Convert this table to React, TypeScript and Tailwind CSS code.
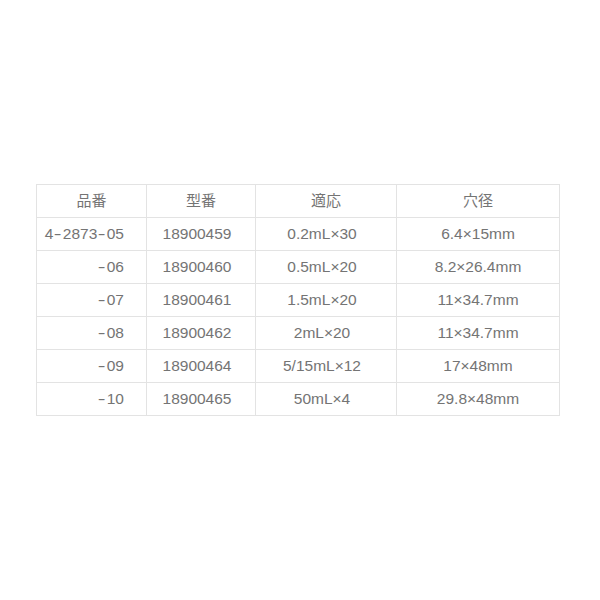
const rows = [
  { code: '4-2873-05', model: '18900459', fit: '0.2mL×30', hole: '6.4×15mm' },
  { code: '-06', model: '18900460', fit: '0.5mL×20', hole: '8.2×26.4mm' },
  { code: '-07', model: '18900461', fit: '1.5mL×20', hole: '11×34.7mm' },
  { code: '-08', model: '18900462', fit: '2mL×20', hole: '11×34.7mm' },
  { code: '-09', model: '18900464', fit: '5/15mL×12', hole: '17×48mm' },
  { code: '-10', model: '18900465', fit: '50mL×4', hole: '29.8×48mm' },
];

// hyphens in the source are set wider than Arial's, so give them their own box
const Code = ({ text }: { text: string }) => {
  const parts = text.split('-');
  return (
    <>
      {parts.map((p, i) => (
        <span key={i}>
          {i > 0 && <span className="inline-block w-[9.5px] text-center scale-x-150">-</span>}
          {p}
        </span>
      ))}
    </>
  );
};

const App = () => {
  return (
    <div
      className="w-[600px] h-[600px] bg-white pt-[184px] pl-[36px]"
      style={{ fontFamily: '"Liberation Sans", "Noto Sans CJK JP", sans-serif' }}
    >
      <table className="table-fixed border-collapse text-[15.5px] text-[#747474] w-[523px]">
        <colgroup>
          <col className="w-[110px]" />
          <col className="w-[109px]" />
          <col className="w-[141px]" />
          <col className="w-[163px]" />
        </colgroup>
        <thead>
          <tr className="h-[33px]">
            {['品番', '型番', '適応', '穴径'].map((h) => (
              <th key={h} className="border border-[#e3e3e3] font-normal text-center p-0 text-[15px]">
                {h}
              </th>
            ))}
          </tr>
        </thead>
        <tbody>
          {rows.map((r) => (
            <tr key={r.model} className="h-[33px]">
              <td className="border border-[#e3e3e3] text-right p-0 pr-[22px]">
                <Code text={r.code} />
              </td>
              <td className="border border-[#e3e3e3] text-center p-0 pr-[8px]">{r.model}</td>
              <td className="border border-[#e3e3e3] text-center p-0 pr-[8px]">{r.fit}</td>
              <td className="border border-[#e3e3e3] text-center p-0">{r.hole}</td>
            </tr>
          ))}
        </tbody>
      </table>
    </div>
  );
};

export default App;
